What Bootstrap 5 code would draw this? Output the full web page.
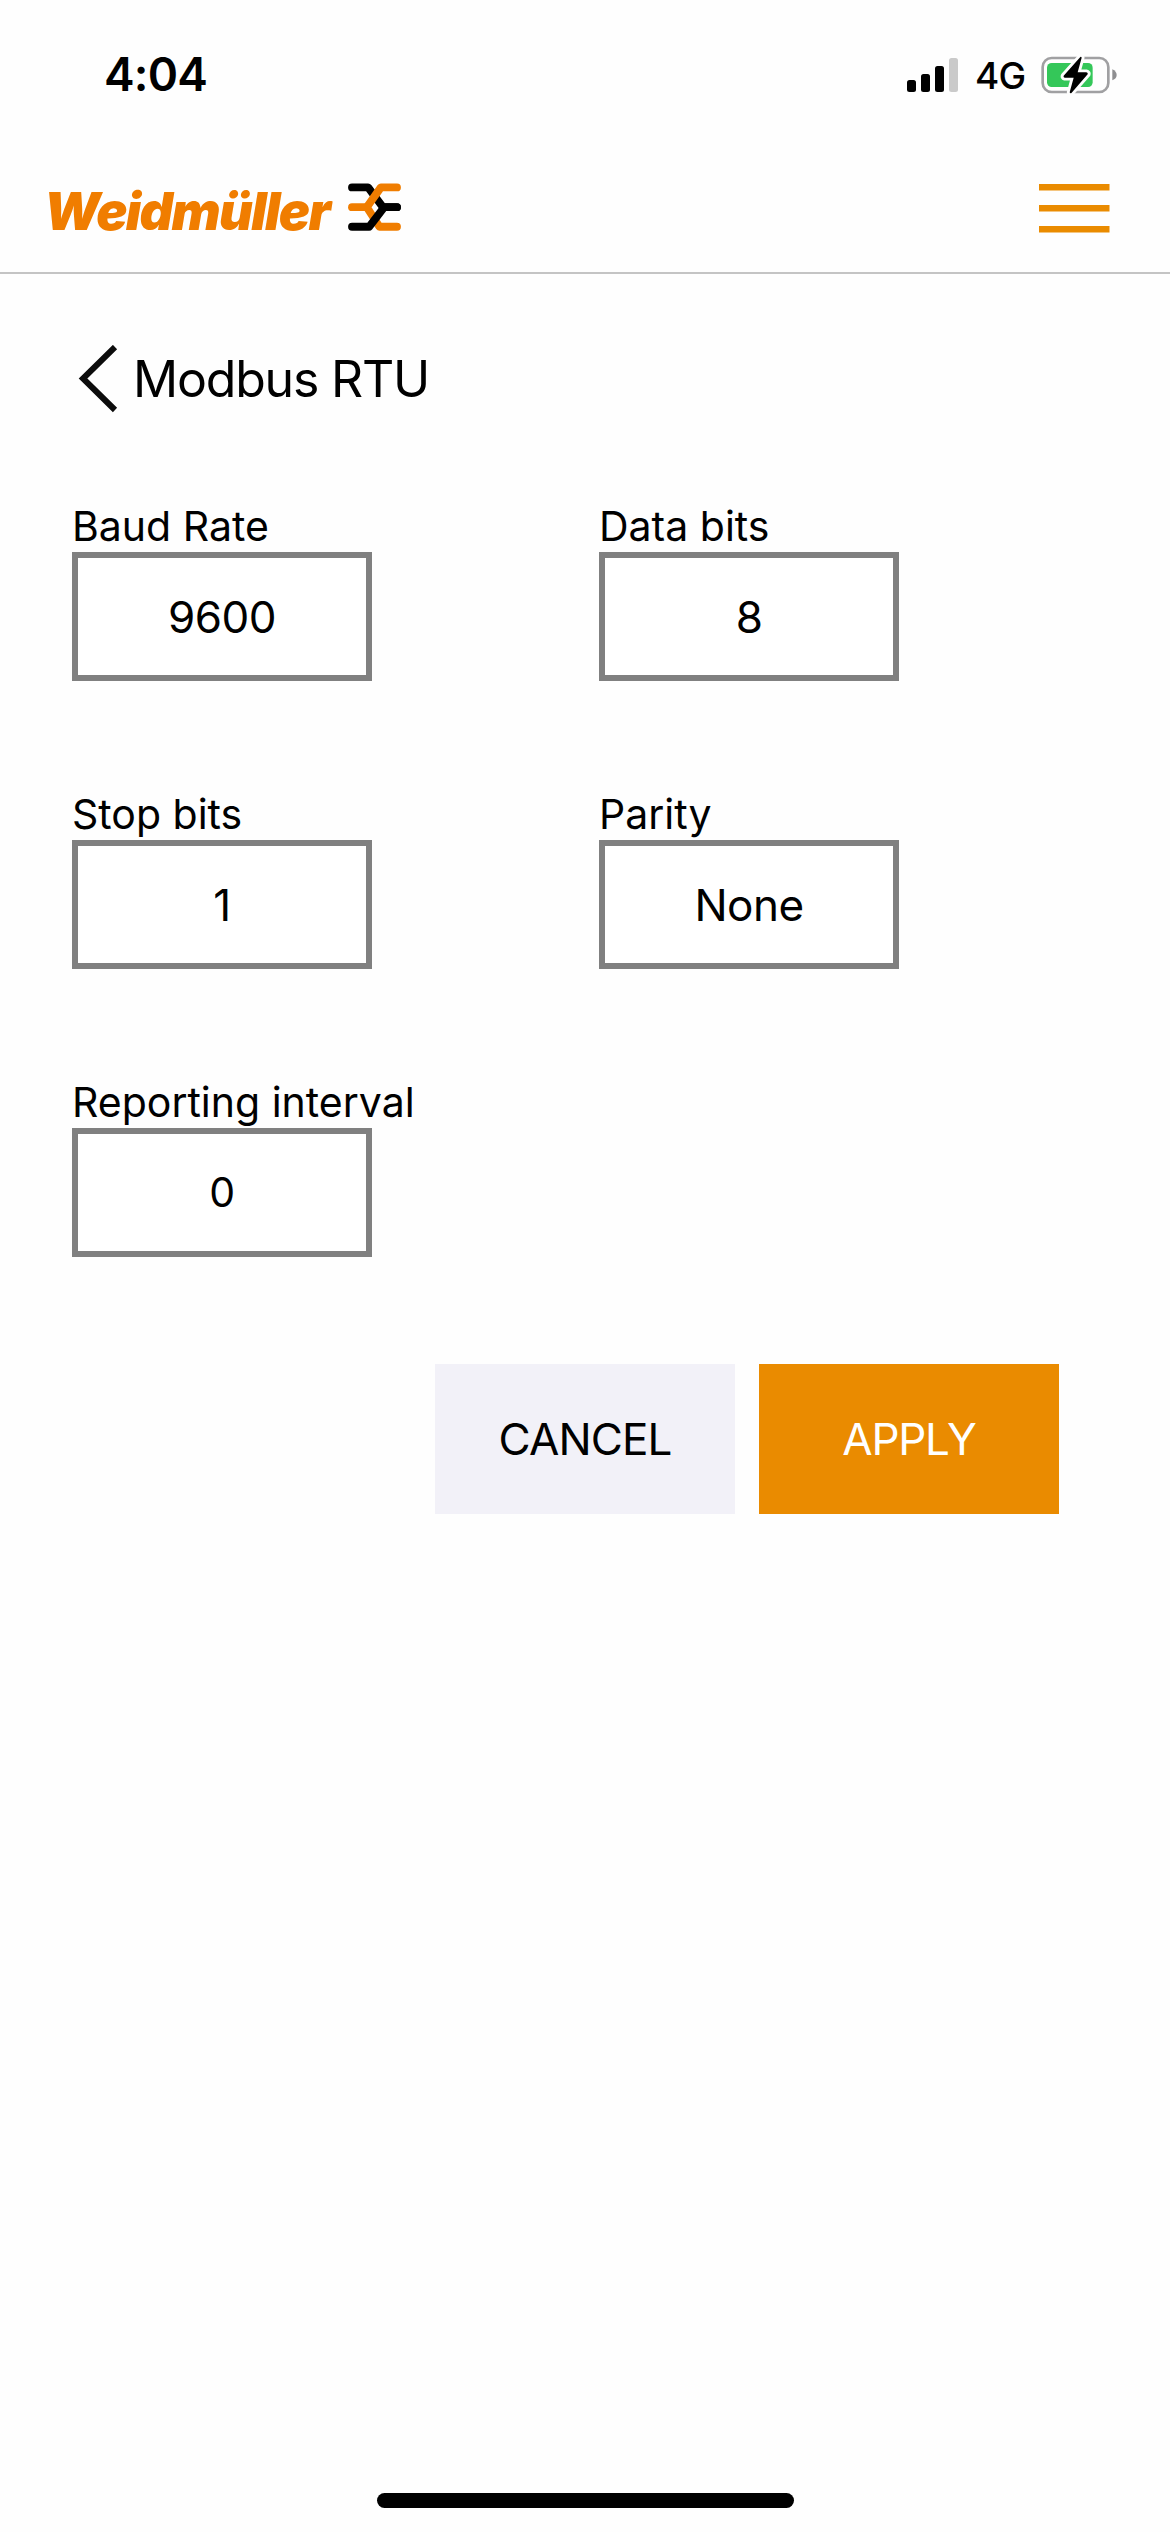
<!DOCTYPE html>
<html lang="en">
<head>
<meta charset="utf-8">
<meta name="viewport" content="width=device-width, initial-scale=1">
<title>Modbus RTU</title>
<link href="https://cdn.jsdelivr.net/npm/bootstrap@5.3.0/dist/css/bootstrap.min.css" rel="stylesheet">
<style>
  body { font-family: Inter, "Liberation Sans", sans-serif; color: #000; background: #fefefe; height: 2532px; line-height: 1; overflow: hidden; }
  .status { height: 141px; padding: 0 52px 0 104px; }
  .clock { font-size: 46px; font-weight: 600; padding-top: 7px; letter-spacing: -.8px; }
  .status-icons { padding-top: 8px; }
  .carrier { font-size: 37px; font-weight: 500; width: 49px; margin: 2px 17px 0 17px; letter-spacing: -.8px; }
  .brandbar { height: 133px; padding: 4px 60px 0 48px; border-bottom: 2px solid #c4c4c4; }
  .brand-name { color: #f07d00; font-size: 52px; font-weight: 900; font-style: italic; letter-spacing: -1.6px; width: 304px; margin-left: -4px; padding-top: 6px; white-space: nowrap; }
  .brand-mark { margin-bottom: 3px; }
  .title-row { padding: 71px 0 0 78px; height: 226px; }
  .title-text { font-size: 50px; font-weight: 400; margin: 0 0 0 15px; padding-top: 4px; letter-spacing: -1.2px; }
  .fields { padding-left: 72px; --bs-gutter-x: 0; }
  .fieldcol { width: 527px; height: 288px; }
  .fieldcol label { font-size: 41px; height: 52px; line-height: 52px; white-space: nowrap; }
  .value { width: 300px; height: 129px; border: 6px solid #808080; border-radius: 0; background: #fff; font-size: 44px; letter-spacing: -.5px; color: #000; padding: 0; text-align: center; }
  .value-sm { font-size: 41px; }
  .actions { padding-right: 111px; gap: 24px; }
  .action { width: 300px; height: 150px; border: 0; border-radius: 0; font-size: 44px; padding: 0; letter-spacing: -.9px; }
  .action-cancel { background: #f2f1f8; color: #000; }
  .action-apply { background: #ea8b00; color: #fff; letter-spacing: -1.3px; }
  .homebar { width: 417px; height: 15px; margin-bottom: 24px; }
</style>
</head>
<body class="d-flex flex-column">
<div class="status d-flex align-items-center justify-content-between">
  <div class="clock">4:04</div>
  <div class="status-icons d-flex align-items-center">
    <svg width="51" height="34" viewBox="0 0 51 34"><rect y="22" width="9" height="12" rx="2.5"/><rect x="14" y="16" width="9" height="18" rx="2.5"/><rect x="28" y="8" width="9" height="26" rx="2.5"/><rect x="42" width="9" height="34" rx="2.5" fill="#cacaca"/></svg>
    <div class="carrier">4G</div>
    <svg width="77" height="38" viewBox="479 75 231 114"><rect x="484" y="81" width="197" height="102" rx="27" fill="none" stroke="#a0a0a2" stroke-width="8"/><rect x="497" y="96" width="137" height="72" rx="14" fill="#34c759"/><path d="M693 115q13 6 13 17t-13 16z" fill="#8e8e90"/><path d="M597 78L547 134Q545 139 550 140H577L565 184Q567 189 571 185L619 130Q621 125 615 124H589L601 80Q600 76 597 78Z" stroke="#fefefe" stroke-width="17" stroke-linejoin="round" paint-order="stroke"/></svg>
  </div>
</div>
<nav class="brandbar d-flex align-items-center justify-content-between">
  <div class="d-flex align-items-center">
    <div class="brand-name">Weidmüller</div>
    <svg class="brand-mark" width="53" height="48" viewBox="954 68 158 143" fill="none" stroke-width="23.5" stroke-linecap="round" stroke-linejoin="round"><path d="M966 81H1014L1058 140H1100" stroke="#000"/><path d="M1100 81H1052L1010 140L1048 198.500H1100" stroke="#f07d00"/><path d="M1010 140H966" stroke="#f07d00"/><path d="M966 198.500H1017L1062 140H1100" stroke="#000"/></svg>
  </div>
  <svg width="71" height="49" viewBox="0 0 71 49" fill="#ea8b00"><rect width="70.500" height="6.500"/><rect y="21" width="70.500" height="6.500"/><rect y="42" width="70.500" height="6.500"/></svg>
</nav>
<main>
  <div class="title-row d-flex align-items-start">
    <svg width="40" height="68" viewBox="0 0 40 68" fill="none" stroke="#0c0c0c" stroke-width="6"><path d="M37 2L5 33.500L37 65"/></svg>
    <h1 class="title-text">Modbus RTU</h1>
  </div>
  <form>
    <div class="fields row">
      <div class="fieldcol d-flex flex-column"><label>Baud Rate</label><div class="value form-control d-flex align-items-center justify-content-center">9600</div></div>
      <div class="fieldcol d-flex flex-column"><label>Data bits</label><div class="value form-control d-flex align-items-center justify-content-center">8</div></div>
      <div class="fieldcol d-flex flex-column"><label>Stop bits</label><div class="value form-control d-flex align-items-center justify-content-center">1</div></div>
      <div class="fieldcol d-flex flex-column"><label>Parity</label><div class="value form-control d-flex align-items-center justify-content-center">None</div></div>
      <div class="fieldcol d-flex flex-column"><label>Reporting interval</label><div class="value value-sm form-control d-flex align-items-center justify-content-center">0</div></div>
    </div>
    <div class="actions d-flex justify-content-end">
      <button type="button" class="btn action action-cancel">CANCEL</button>
      <button type="button" class="btn action action-apply">APPLY</button>
    </div>
  </form>
</main>
<div class="homebar bg-black rounded-pill mt-auto mx-auto"></div>
<script src="https://cdn.jsdelivr.net/npm/bootstrap@5.3.0/dist/js/bootstrap.bundle.min.js"></script>
</body>
</html>
